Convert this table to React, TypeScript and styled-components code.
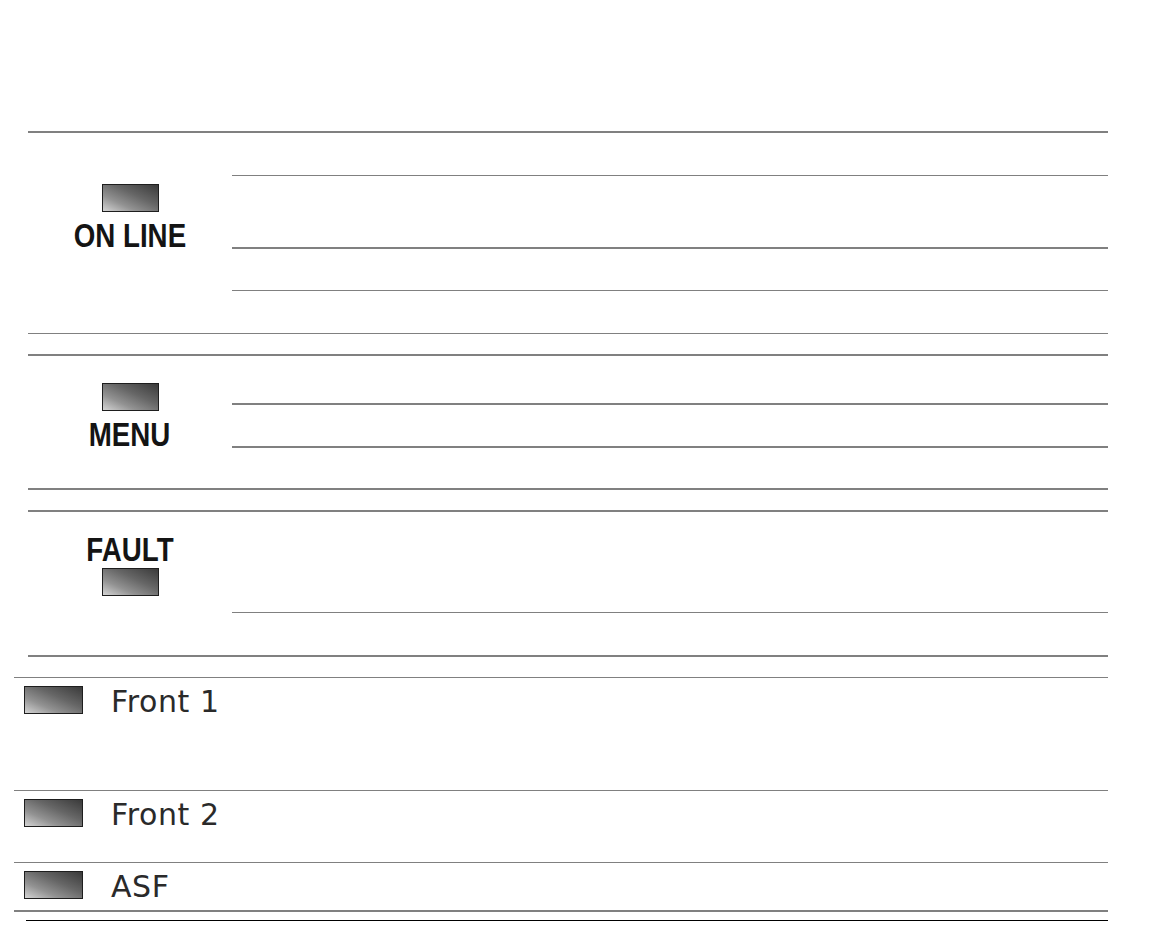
import React from 'react';
import styled, { createGlobalStyle } from 'styled-components';

// Types
type RowSpec = {
	h: number;
	line?: number;
};

type PanelKey = {
	label: string;
	padTop: number;
	lampFirst: boolean;
	rows: RowSpec[];
	topLine: number;
	bottomLine: number;
};

// Data
const panelKeys: PanelKey[] = [
	{
		label: 'ON LINE',
		padTop: 51,
		lampFirst: true,
		topLine: 2,
		bottomLine: 1,
		rows: [{ h: 42 }, { h: 71, line: 1 }, { h: 41, line: 2 }, { h: 42, line: 1 }],
	},
	{
		label: 'MENU',
		padTop: 27,
		lampFirst: true,
		topLine: 2,
		bottomLine: 2,
		rows: [{ h: 47 }, { h: 41, line: 2 }, { h: 40, line: 2 }],
	},
	{
		label: 'FAULT',
		padTop: 22,
		lampFirst: false,
		topLine: 2,
		bottomLine: 2,
		rows: [{ h: 100 }, { h: 42, line: 1 }],
	},
];

const lights = [
	{ label: 'Front 1', h: 112 },
	{ label: 'Front 2', h: 71 },
	{ label: 'ASF', h: 47 },
];

/**
 * Printer control panel reference sheet
 */
const App: React.FC = () => (
	<>
		<GlobalStyle />
		<Page>
			{ panelKeys.map((key) => (
				<KeySection key={ key.label } $top={ key.topLine } $bottom={ key.bottomLine }>
					<KeyCell $padTop={ key.padTop }>
						{ key.lampFirst && <Lamp /> }
						<KeyLabel $lampFirst={ key.lampFirst }>{ key.label }</KeyLabel>
						{ !key.lampFirst && <Lamp /> }
					</KeyCell>
					<RowColumn>
						{ key.rows.map((row, i) => (
							<BlankRow key={ i } $h={ row.h } $line={ row.line ?? 0 } />
						)) }
					</RowColumn>
				</KeySection>
			)) }

			<LightTable>
				{ lights.map((light) => (
					<LightRow key={ light.label } $h={ light.h }>
						<Lamp $wide />
						<LightLabel>{ light.label }</LightLabel>
					</LightRow>
				)) }
			</LightTable>
			<EndRule />
		</Page>
	</>
);
export default App;

// Styles
const GlobalStyle = createGlobalStyle`
	html, body {
		margin: 0;
		padding: 0;
		background: #ffffff;
	}
	body {
		font-family: "Liberation Sans", Arial, sans-serif;
		color: #111;
	}
`;

const Page = styled.div`
	width: 1162px;
	height: 947px;
	padding-top: 131px;
	box-sizing: border-box;
	display: flex;
	flex-direction: column;
`;

const KeySection = styled.section<{ $top: number; $bottom: number }>`
	margin-left: 28px;
	width: 1080px;
	display: grid;
	grid-template-columns: 204px 1fr;
	border-top: ${ (p) => p.$top }px solid #808080;
	border-bottom: ${ (p) => p.$bottom }px solid #808080;

	& + & {
		margin-top: 20px;
	}
`;

const KeyCell = styled.div<{ $padTop: number }>`
	display: flex;
	flex-direction: column;
	align-items: center;
	padding-top: ${ (p) => p.$padTop }px;
`;

const Lamp = styled.div<{ $wide?: boolean }>`
	width: ${ (p) => (p.$wide ? 59 : 57) }px;
	height: 28px;
	box-sizing: border-box;
	border: 1px solid #1e1e1e;
	background: linear-gradient(to top right, #d4d4d4 0%, #929292 30%, #666 60%, #3a3a3a 100%);
	flex: none;
`;

const KeyLabel = styled.div<{ $lampFirst: boolean }>`
	font-family: "Liberation Sans", Arial, sans-serif;
	font-weight: bold;
	font-size: 33px;
	line-height: 32px;
	color: #141414;
	transform: scaleX(0.84);
	margin-top: ${ (p) => (p.$lampFirst ? 8 : 0) }px;
	margin-bottom: ${ (p) => (p.$lampFirst ? 0 : 2) }px;
`;

const RowColumn = styled.div`
	display: flex;
	flex-direction: column;
`;

const BlankRow = styled.div<{ $h: number; $line: number }>`
	height: ${ (p) => p.$h }px;
	border-top: ${ (p) => p.$line }px solid #808080;
`;

const LightTable = styled.div`
	margin-top: 20px;
	margin-left: 14px;
	width: 1094px;
	border-bottom: 2px solid #808080;
`;

const LightRow = styled.div<{ $h: number }>`
	height: ${ (p) => p.$h - 8 }px;
	border-top: 1px solid #808080;
	display: flex;
	align-items: flex-start;
	padding: 8px 0 0 10px;
`;

const LightLabel = styled.div`
	font-family: "DejaVu Sans", sans-serif;
	font-weight: normal;
	font-size: 30px;
	line-height: 30px;
	letter-spacing: 0.6px;
	margin: 1px 0 0 28px;
	color: #2a2a2a;
`;

const EndRule = styled.div`
	margin: 8px 0 0 26px;
	width: 1082px;
	border-top: 1px solid #000;
`;
